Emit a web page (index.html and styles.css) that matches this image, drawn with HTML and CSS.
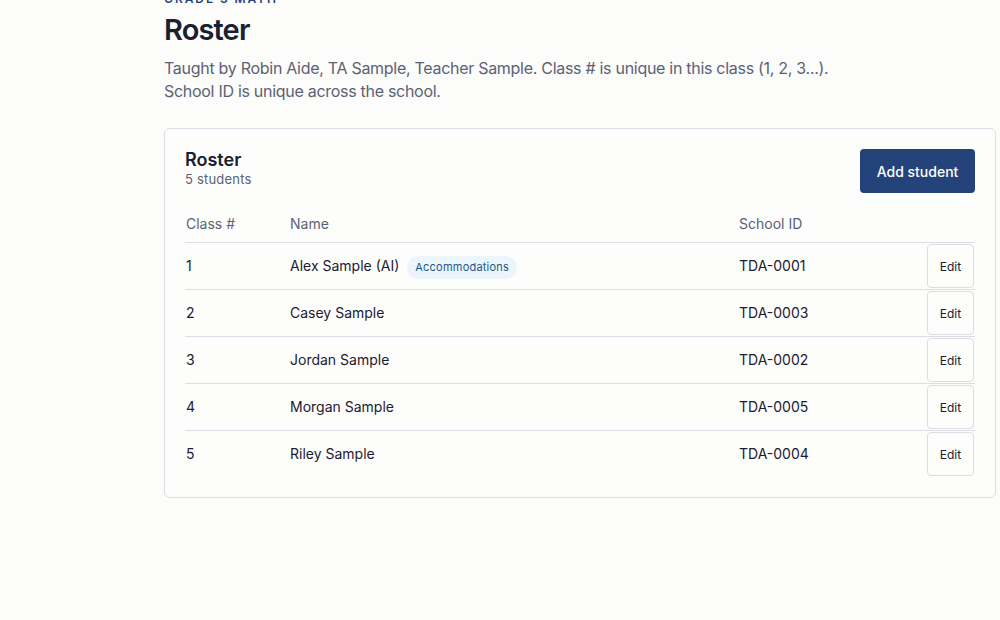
FILE: index.html
```html
<!DOCTYPE html>
<html lang="en">
<head>
<meta charset="utf-8">
<title>Roster</title>
<link rel="stylesheet" href="styles.css">
</head>
<body>
<main class="page">
  <div class="eyebrow">Grade 3 Math</div>
  <h1 class="title">Roster</h1>
  <p class="lede">Taught by Robin Aide, TA Sample, Teacher Sample. Class # is unique in this class (1, 2, 3...). School ID is unique across the school.</p>

  <section class="card">
    <div class="card-head">
      <div>
        <h2 class="card-title">Roster</h2>
        <div class="card-sub">5 students</div>
      </div>
      <button class="btn-primary">Add student</button>
    </div>

    <div class="table">
      <div class="row head">
        <div>Class #</div>
        <div>Name</div>
        <div>School ID</div>
        <div></div>
      </div>
      <div class="row">
        <div>1</div>
        <div class="name">Alex Sample (AI) <span class="badge">Accommodations</span></div>
        <div>TDA-0001</div>
        <div class="act"><button class="btn-edit">Edit</button></div>
      </div>
      <div class="row">
        <div>2</div>
        <div class="name">Casey Sample</div>
        <div>TDA-0003</div>
        <div class="act"><button class="btn-edit">Edit</button></div>
      </div>
      <div class="row">
        <div>3</div>
        <div class="name">Jordan Sample</div>
        <div>TDA-0002</div>
        <div class="act"><button class="btn-edit">Edit</button></div>
      </div>
      <div class="row">
        <div>4</div>
        <div class="name">Morgan Sample</div>
        <div>TDA-0005</div>
        <div class="act"><button class="btn-edit">Edit</button></div>
      </div>
      <div class="row last">
        <div>5</div>
        <div class="name">Riley Sample</div>
        <div>TDA-0004</div>
        <div class="act"><button class="btn-edit">Edit</button></div>
      </div>
    </div>
  </section>
</main>
</body>
</html>
```

FILE: styles.css
```css
* { box-sizing: border-box; }

html, body {
  margin: 0;
  padding: 0;
  background: #fcfcfa;
  overflow: hidden;
}

body {
  font-family: Inter, "Noto Sans", "Liberation Sans", sans-serif;
  color: #1b2030;
}

.page {
  width: 832px;
  margin-left: 164px;
}

.eyebrow {
  margin-top: -9px;
  font-size: 12px;
  line-height: 16px;
  font-weight: 600;
  letter-spacing: 0.16em;
  text-transform: uppercase;
  color: #23427a;
}

.title {
  margin: 5px 0 0;
  font-size: 29px;
  line-height: 36px;
  font-weight: 600;
  letter-spacing: -0.03em;
  color: #1b2030;
}

.lede {
  margin: 9px 0 0;
  max-width: 690px;
  font-size: 16px;
  line-height: 23px;
  letter-spacing: -0.018em;
  color: #5b6275;
}

.card {
  margin-top: 25px;
  border: 1px solid #dcdde4;
  border-radius: 6px;
  background: #fdfdfc;
  padding: 20px;
}

.card-head {
  display: flex;
  justify-content: space-between;
  align-items: flex-start;
}

.card-title {
  margin: 0;
  font-size: 18px;
  line-height: 21px;
  font-weight: 600;
  color: #1b2030;
}

.card-sub {
  font-size: 13px;
  line-height: 18px;
  letter-spacing: 0.015em;
  color: #5b6275;
}

.btn-primary {
  height: 44px;
  width: 115px;
  padding: 0;
  border: none;
  border-radius: 4px;
  background: #24437a;
  color: #ffffff;
  font-family: inherit;
  font-size: 14px;
  font-weight: 500;
}

.table {
  margin-top: 13px;
}

.row {
  display: grid;
  grid-template-columns: 105px 449px 1fr 48px;
  align-items: center;
  border-bottom: 1px solid #dcdde4;
  font-size: 14px;
  line-height: 20px;
}

.row > div {
  padding: 1px 0;
}

.row > div:first-child {
  padding-left: 1px;
}

.row.head {
  color: #5b6275;
}

.row.head > div {
  padding-top: 8px;
  padding-bottom: 8px;
}

.row.last {
  border-bottom: none;
}

.name {
  display: flex;
  align-items: center;
  gap: 8px;
}

.badge {
  display: inline-block;
  padding: 4px 8px;
  border-radius: 999px;
  background: #edf5fc;
  color: #1d5788;
  font-size: 11px;
  line-height: 15px;
  letter-spacing: 0.02em;
  margin-top: 2px;
}

.act {
  display: flex;
  justify-content: flex-start;
}

.btn-edit {
  height: 44px;
  width: 47px;
  padding: 0;
  border: 1px solid #dcdde4;
  border-radius: 4px;
  background: #fdfdfc;
  color: #1b2030;
  font-family: inherit;
  font-size: 12px;
}
```
